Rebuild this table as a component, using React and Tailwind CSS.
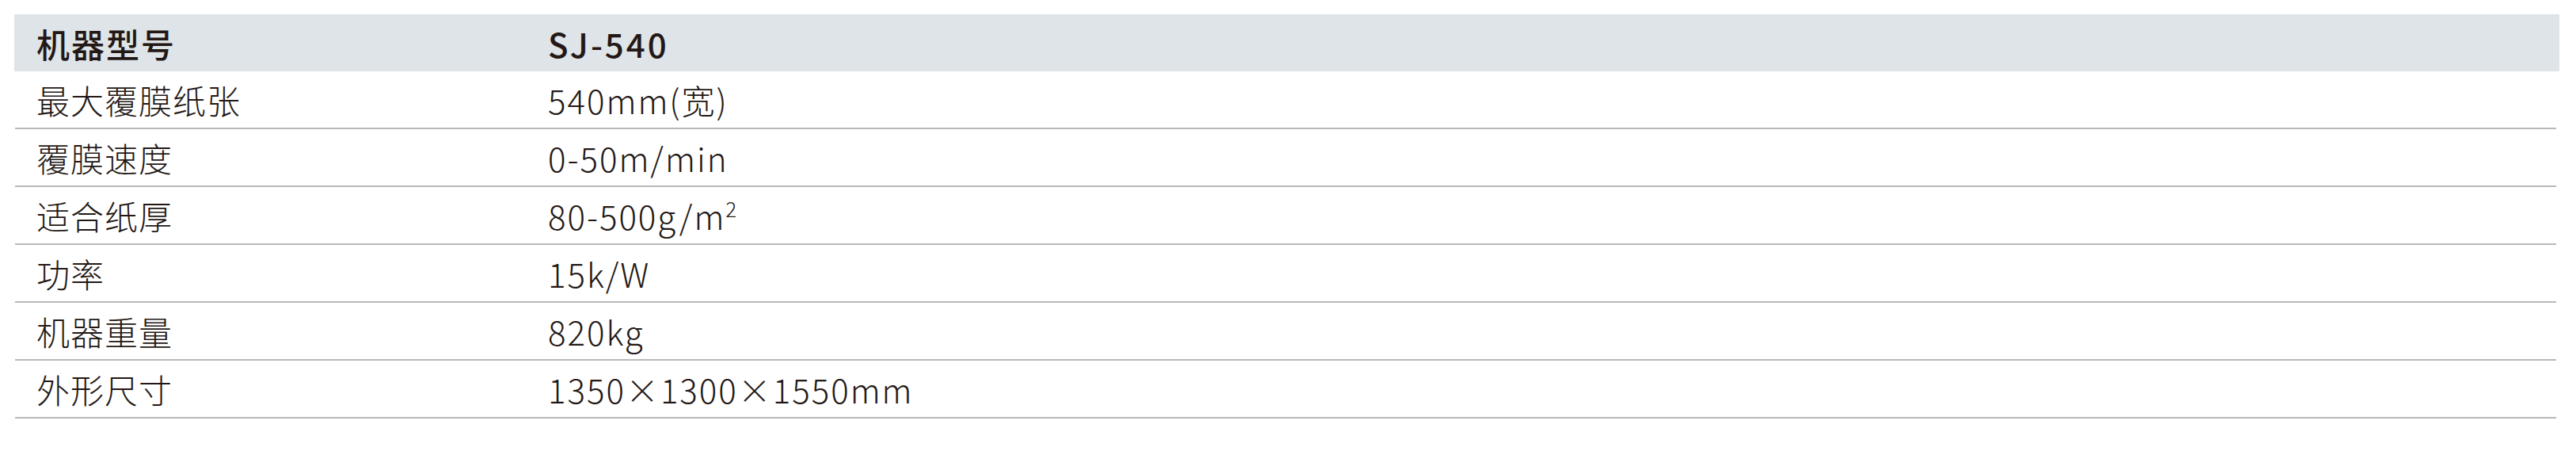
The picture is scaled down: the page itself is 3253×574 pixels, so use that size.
import React from 'react';

const rows = [
  ['最大覆膜纸张', '540mm(宽)'],
  ['覆膜速度', '0-50m/min'],
  ['适合纸厚', <>80-500g/m<sup className="text-[26px] -top-[16px]">2</sup></>],
  ['功率', '15k/W'],
  ['机器重量', '820kg'],
  ['外形尺寸', '1350×1300×1550mm'],
];

export default function App() {
  return (
    <div
      className="w-[3253px] h-[574px] bg-white pt-[18px] pl-[19px] pr-[25px] text-[#231815]"
      style={{ fontFamily: '"Noto Sans CJK SC", "Noto Sans", sans-serif' }}
    >
      {/* 表头 */}
      <div className="flex items-center h-[72px] bg-[#dfe4e8] -ml-[1px] -mr-[4px] text-[42px] font-medium">
        <div className="w-[674px] pl-[28px] tracking-[2px]">机器型号</div>
        <div className="tracking-[3px]">SJ-540</div>
      </div>

      {/* 参数行 */}
      {rows.map(([label, value], i) => (
        <div
          key={i}
          className="flex items-center h-[73px] border-b-2 border-[#b9b9b9] text-[42px] font-light leading-none"
        >
          <div className="w-[673px] pl-[27px] tracking-[1px]">{label}</div>
          <div className="tracking-[2px]">{value}</div>
        </div>
      ))}
    </div>
  );
}
